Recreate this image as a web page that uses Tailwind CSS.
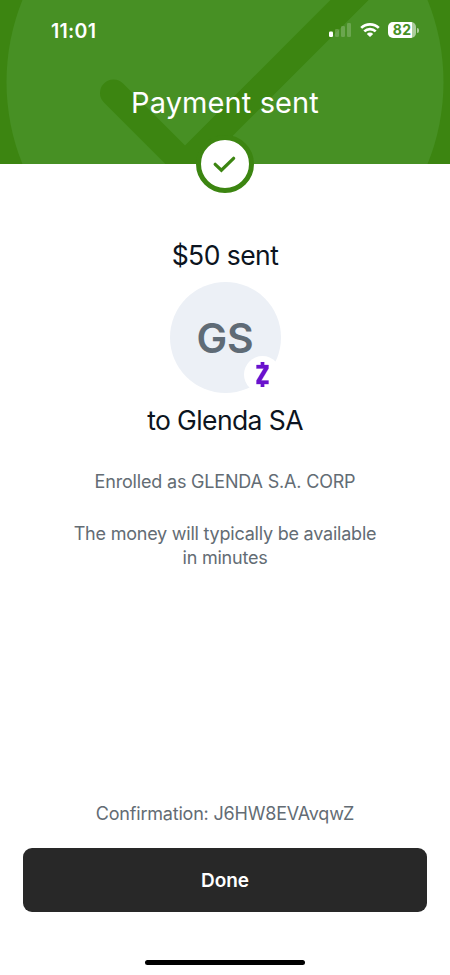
<!DOCTYPE html>
<html lang="en">
<head>
<meta charset="utf-8">
<meta name="viewport" content="width=device-width, initial-scale=1">
<title>Payment sent</title>
<script src="https://cdn.jsdelivr.net/npm/@tailwindcss/browser@4"></script>
</head>
<body class="bg-white">
<main class="relative flex h-[975px] w-[450px] flex-col overflow-hidden bg-white font-[Inter,sans-serif] text-[#0c1420]">
  <header class="relative h-[164px] shrink-0 bg-[#3c8511] text-white">
    <svg class="absolute inset-0" width="450" height="164" viewBox="0 0 450 164" fill="none">
      <circle cx="225" cy="82" r="218.5" fill="#479024"/>
      <path d="M113.5 93 185 164.500 369.500 -20" stroke="#3c8511" stroke-width="27" stroke-linecap="round"/>
    </svg>
    <div class="relative flex h-[60px] items-center pl-[51px] pr-[31px]">
      <span class="pt-px text-[19.500px] font-semibold leading-6 tracking-[0.3px]">11:01</span>
      <div class="ml-auto flex items-center">
        <svg width="24" height="16" viewBox="0 0 24 16" fill="#fff">
          <rect x="1" y="9.500" width="4" height="5.500" rx="1.200"/>
          <g fill-opacity=".2"><rect x="7" y="7" width="4" height="8" rx="1.200"/><rect x="13" y="4" width="4" height="11" rx="1.200"/><rect x="19" y="1" width="4" height="14" rx="1.200"/></g>
        </svg>
        <svg class="ml-[8px]" width="20" height="16" viewBox="0 0 20 16" fill="none" stroke="#fff" stroke-width="2.700">
          <path d="M1.200 5.900a12.600 12.600 0 0 1 17.600 0M4.300 9.400a8.200 8.200 0 0 1 11.400 0"/>
          <path d="M10 15 6.800 11.900a4.500 4.500 0 0 1 6.400 0Z" fill="#fff" stroke="none"/>
        </svg>
        <div class="ml-[8px] flex h-4 w-[28px] items-center justify-center rounded-[5px] bg-linear-to-r from-white from-85% to-white/55 to-85% text-[14px] font-bold leading-4 tracking-[0.3px] text-[#479024]">82</div>
        <div class="ml-px h-[5px] w-[2px] rounded-r-full bg-white/55"></div>
      </div>
    </div>
    <h1 class="relative mt-[25px] text-center text-[29px] leading-9 tracking-[0.1px]">Payment sent</h1>
    <div class="absolute left-[196px] top-[135px] flex size-[58px] items-center justify-center rounded-full border-[5px] border-[#3c8511] bg-white">
      <svg class="shrink-0" width="24" height="20" viewBox="0 0 24 20" fill="none" stroke="#3c8511" stroke-width="3.200" stroke-linecap="round"><path d="M2.200 10.300 8.400 16.200 20.600 4.300"/></svg>
    </div>
  </header>

  <section class="flex flex-col items-center text-center">
    <p class="mt-[73px] text-[26.500px] leading-9 tracking-[-0.55px]">$50 sent</p>
    <div class="relative mt-[9px] flex size-[111px] items-center justify-center rounded-full bg-[#ecf0f6] pt-[2px] text-[41px] font-semibold tracking-[-0.3px] text-[#5f6b76]">GS
      <div class="absolute left-[74px] top-[74px] flex size-[37px] items-center justify-center rounded-full bg-white">
        <svg width="13" height="25" viewBox="0 0 13 25" fill="#6a12cd"><path d="M4.800 0h3.400v3H12.500v3.500L5.300 18.600H12.500v3.500H8.200v2.900H4.800v-2.900H.5v-3.500L7.700 6.500H.5V3h4.300Z" stroke="#6a12cd" stroke-width=".3"/></svg>
      </div>
    </div>
    <p class="mt-[9px] text-[26.500px] leading-9 tracking-[-0.6px]">to Glenda SA</p>
    <p class="mt-[32px] text-[18px] leading-6 tracking-[-0.18px] text-[#636c74]">Enrolled as GLENDA S.A. CORP</p>
    <p class="mt-[28px] text-[18px] leading-6 tracking-[-0.22px] text-[#636c74]">The money will typically be available<br>in minutes</p>
  </section>

  <footer class="mt-auto flex flex-col items-center px-[23px] pb-[10px]">
    <p class="text-[18px] leading-6 tracking-[-0.2px] text-[#636c74]">Confirmation: J6HW8EVAvqwZ</p>
    <button class="mt-[22px] h-[64px] w-full rounded-[9px] bg-[#282828] pt-[2px] text-[19px] font-semibold text-white">Done</button>
    <div class="mt-[48px] h-[5px] w-[160px] rounded-full bg-black"></div>
  </footer>
</main>
</body>
</html>
